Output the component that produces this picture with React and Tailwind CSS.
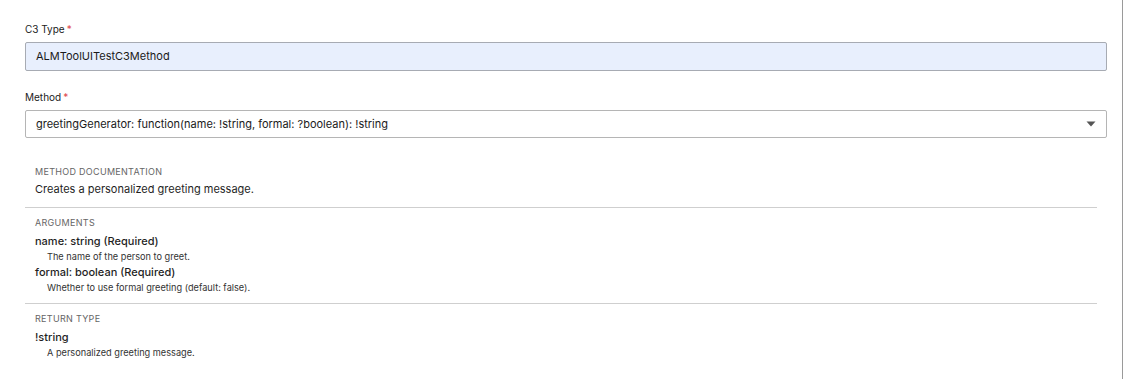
import React from 'react';

const font = { fontFamily: 'Inter, "Noto Sans", sans-serif' };

const Label = ({ children }) => (
  <div className="mb-[6px] text-[10px] leading-[13px] text-[#222]">
    {children}
    <span className="ml-[2px] text-[#e0474c]">*</span>
  </div>
);

const Arg = ({ name, desc }) => (
  <div>
    <div className="text-[11px] leading-[15px] font-medium text-[#1f1f1f]">{name}</div>
    <div className="pl-3 text-[9.2px] leading-[16px] text-[#333]">{desc}</div>
  </div>
);

const SectionTitle = ({ children }) => (
  <div className="text-[9px] leading-[12px] tracking-[0.3px] uppercase text-[#666]">{children}</div>
);

export default function App() {
  return (
    <div className="h-[379px] w-[1124px] bg-white" style={font}>
      <div className="h-full w-[1123px] border-r border-[#9a9a9a] pt-[23px] pl-[25px] pr-[15px]">
        {/* C3 Type */}
        <Label>C3 Type</Label>
        <div className="flex h-[29px] items-center rounded-[2px] border border-[#a7abb3] bg-[#e8effd] px-[10px] text-[11px] text-[#1a1a1a]">
          ALMToolUITestC3Method
        </div>

        {/* Method */}
        <div className="mt-[20px]">
          <Label>Method</Label>
          <div className="flex h-[28px] items-center justify-between rounded-[2px] border border-[#b5b5b5] bg-white px-[10px] text-[11px] text-[#1a1a1a]">
            <span>greetingGenerator: function(name: !string, formal: ?boolean): !string</span>
            <svg width="10" height="6" viewBox="0 0 10 6">
              <path d="M0.5 0.5 L9.5 0.5 L5 5.5 Z" fill="#555" />
            </svg>
          </div>
        </div>

        {/* Documentation */}
        <div className="mr-[10px] mt-[28px]">
          <div className="px-[10px] pb-[10px]">
            <SectionTitle>Method Documentation</SectionTitle>
            <div className="mt-[4px] text-[11px] leading-[15px] text-[#1f1f1f]">
              Creates a personalized greeting message.
            </div>
          </div>
          <div className="border-t border-[#cfcfcf] px-[10px] pt-[9px] pb-[7px]">
            <SectionTitle>Arguments</SectionTitle>
            <div className="mt-[5px]">
              <Arg name="name: string (Required)" desc="The name of the person to greet." />
              <Arg name="formal: boolean (Required)" desc="Whether to use formal greeting (default: false)." />
            </div>
          </div>
          <div className="border-t border-[#cfcfcf] px-[10px] pt-[9px]">
            <SectionTitle>Return Type</SectionTitle>
            <div className="mt-[5px]">
              <Arg name="!string" desc="A personalized greeting message." />
            </div>
          </div>
        </div>
      </div>
    </div>
  );
}
